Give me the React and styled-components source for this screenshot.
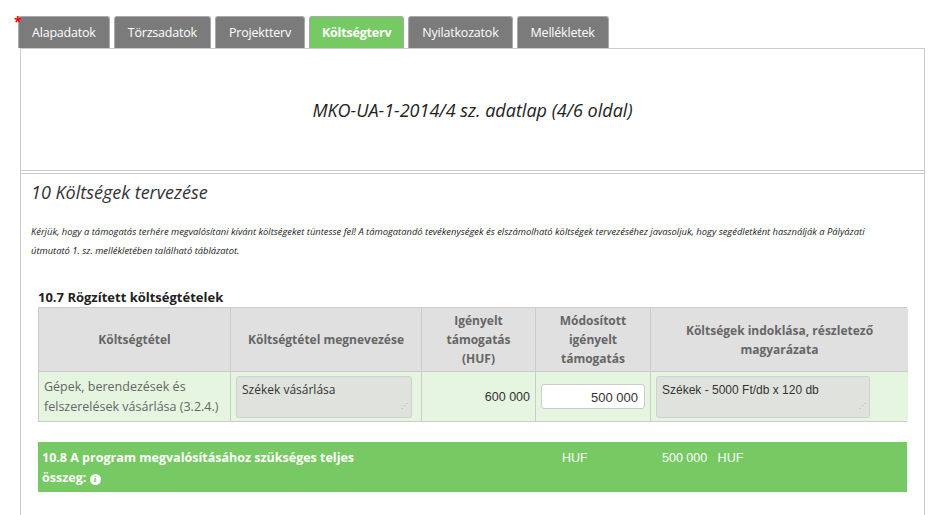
import React from "react";
import styled, { createGlobalStyle } from "styled-components";

const G = createGlobalStyle`
  body{margin:0;background:#fff;font-family:"Open Sans",sans-serif;color:#333;}
`;
const Page = styled.div`width:945px;height:515px;position:relative;overflow:hidden;`;
const Star = styled.span`position:absolute;left:14px;top:12px;color:#e00;font-size:14px;font-weight:bold;`;
const Tabs = styled.div`display:flex;gap:4px;padding:16px 0 0 18px;height:32px;`;
const Tab = styled.div`
  height:32px;box-sizing:border-box;padding:0 ${p=>p.$active?"12px":"13px"};display:flex;align-items:center;
  font-size:12.5px;letter-spacing:-0.2px;color:#fff;border:1px solid #aaa;border-bottom:none;border-radius:3px 3px 0 0;
  background:${p=>p.$active?"#77c963":"#7b7b7b"};font-weight:${p=>p.$active?700:400};
`;
const Panel = styled.div`margin-left:20px;width:903px;border-left:1px solid #ccc;border-right:1px solid #ccc;height:470px;`;
const Header = styled.div`height:121px;border-top:1px solid #ccc;border-bottom:1px solid #ccc;display:flex;align-items:center;justify-content:center;font-size:18px;font-style:italic;color:#222;`;
const Body = styled.div`border-top:1px solid #ccc;margin-top:2px;padding:0 17px;`;
const H2 = styled.div`font-size:18px;font-style:italic;color:#333;padding:6px 0 0 10px;margin-left:-17px;`;
const Para = styled.p`font-size:9.4px;font-style:italic;line-height:19px;margin:18px 0 0 -7px;color:#222;width:870px;`;
const H3 = styled.div`font-size:13px;font-weight:700;color:#222;margin-top:28px;`;
const Table = styled.div`display:grid;grid-template-columns:191px 191px 114px 115px 258px;border:1px solid #ccc;width:869px;box-sizing:border-box;margin-top:1px;`;
const Th = styled.div`background:#e0e0e0;height:63px;display:flex;align-items:center;justify-content:center;text-align:center;font-size:12px;font-weight:700;color:#666;border-left:${p=>p.$first?"none":"1px solid #ccc"};line-height:19px;`;
const Td = styled.div`background:#e5f5e0;height:50px;border-left:${p=>p.$first?"none":"1px solid #ccc"};border-top:1px solid #ccc;display:flex;align-items:center;font-size:12.5px;color:#666;padding:0 5px;justify-content:${p=>p.$right?"flex-end":"flex-start"};line-height:20px;box-sizing:border-box;`;
const Area = styled.div`width:${p=>p.$w}px;height:42px;box-sizing:border-box;background:#e0e3dd;border:1px solid #d0d0d0;border-radius:3px;padding:3px 5px;font-size:12px;color:#333;align-self:center;font-family:${p=>p.$arial?'"Liberation Sans",sans-serif':"inherit"};position:relative;`;
const Grip = styled.span`position:absolute;right:3px;bottom:1px;font-size:7px;color:#aaa;`;
const Input = styled.div`width:104px;height:25px;box-sizing:border-box;background:#fff;border:1px solid #ccc;border-radius:3px;text-align:right;padding:3px 6px;font-size:13px;color:#333;font-family:"Liberation Sans",sans-serif;`;
const Bar = styled.div`margin-top:20px;width:869px;height:50px;background:#77c963;display:grid;grid-template-columns:520px 100px 1fr;color:#fff;font-size:12.5px;font-weight:700;padding:6px 4px;box-sizing:border-box;line-height:20px;`;
const Info = styled.span`display:inline-flex;width:11px;height:11px;border-radius:50%;background:#fff;color:#77c963;font-size:9px;align-items:center;justify-content:center;font-family:"Liberation Serif",serif;`;
const Light = styled.span`font-family:"Liberation Sans",sans-serif;font-weight:400;`;

export default function App(){
  const tabs=["Alapadatok","Törzsadatok","Projektterv","Költségterv","Nyilatkozatok","Mellékletek"];
  return <Page><G/><Star>*</Star>
    <Tabs>{tabs.map(t=><Tab key={t} $active={t==="Költségterv"}>{t}</Tab>)}</Tabs>
    <Panel>
      <Header>MKO-UA-1-2014/4 sz. adatlap (4/6 oldal)</Header>
      <Body>
        <H2>10 Költségek tervezése</H2>
        <Para>Kérjük, hogy a támogatás terhére megvalósítani kívánt költségeket tüntesse fel! A támogatandó tevékenységek és elszámolható költségek tervezéséhez javasoljuk, hogy segédletként használják a Pályázati útmutató 1. sz. mellékletében található táblázatot.</Para>
        <H3>10.7 Rögzített költségtételek</H3>
        <Table>
          <Th $first>Költségtétel</Th>
          <Th>Költségtétel megnevezése</Th>
          <Th>Igényelt<br/>támogatás<br/>(HUF)</Th>
          <Th>Módosított<br/>igényelt<br/>támogatás</Th>
          <Th>Költségek indoklása, részletező<br/>magyarázata</Th>
          <Td $first>Gépek, berendezések és felszerelések vásárlása (3.2.4.)</Td>
          <Td><Area $w={176}>Székek vásárlása<Grip>⋰</Grip></Area></Td>
          <Td $right><Light style={{color:"#333"}}>600 000</Light></Td>
          <Td><Input>500 000</Input></Td>
          <Td><Area $w={214} $arial>Székek - 5000 Ft/db x 120 db<Grip>⋰</Grip></Area></Td>
        </Table>
        <Bar>
          <div>10.8 A program megvalósításához szükséges teljes<br/>összeg: <Info>i</Info></div>
          <div><Light>HUF</Light></div>
          <div><Light>500 000&nbsp;&nbsp;&nbsp;HUF</Light></div>
        </Bar>
      </Body>
    </Panel>
  </Page>;
}
